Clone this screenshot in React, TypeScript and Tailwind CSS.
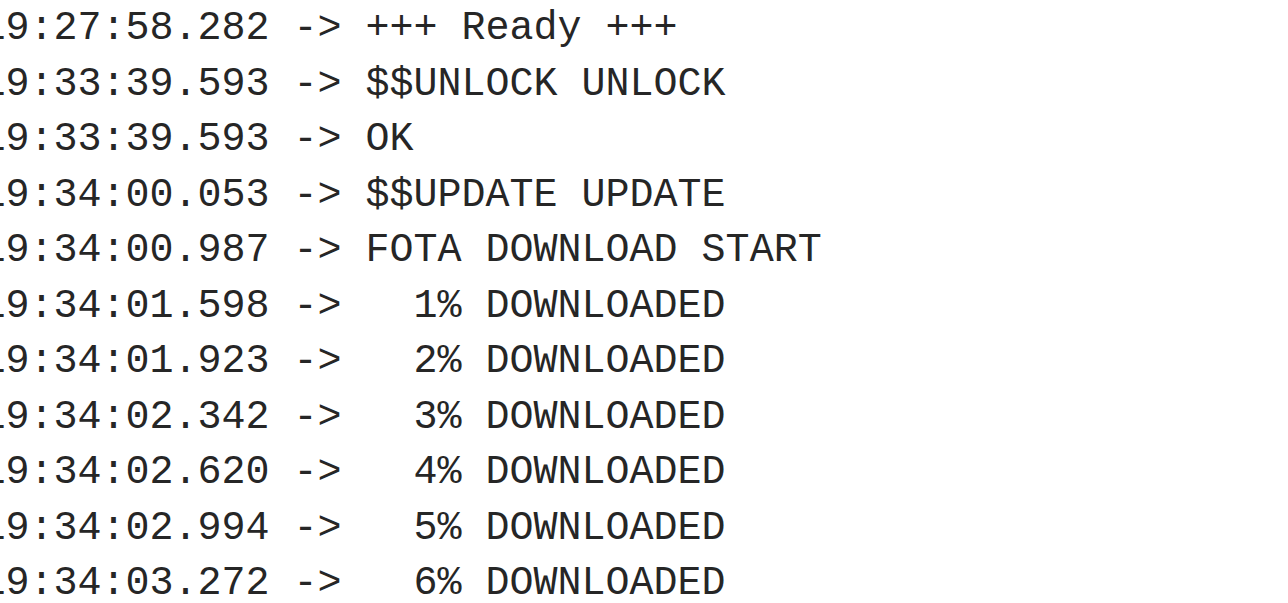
const lines: string[] = [
  "19:27:58.282 -> +++ Ready +++",
  "19:33:39.593 -> $$UNLOCK UNLOCK",
  "19:33:39.593 -> OK",
  "19:34:00.053 -> $$UPDATE UPDATE",
  "19:34:00.987 -> FOTA DOWNLOAD START",
  "19:34:01.598 ->   1% DOWNLOADED",
  "19:34:01.923 ->   2% DOWNLOADED",
  "19:34:02.342 ->   3% DOWNLOADED",
  "19:34:02.620 ->   4% DOWNLOADED",
  "19:34:02.994 ->   5% DOWNLOADED",
  "19:34:03.272 ->   6% DOWNLOADED",
];

export default function App() {
  return (
    <div className="w-[1288px] h-[603px] overflow-hidden bg-white">
      <div className="ml-[-18.5px] pt-[1px] font-['Liberation_Mono','Courier_New',monospace] text-[40px] leading-[55.5px] text-[#262626] whitespace-pre">
        {lines.map((l, i) => (
          <div key={i}>{l}</div>
        ))}
      </div>
    </div>
  );
}
